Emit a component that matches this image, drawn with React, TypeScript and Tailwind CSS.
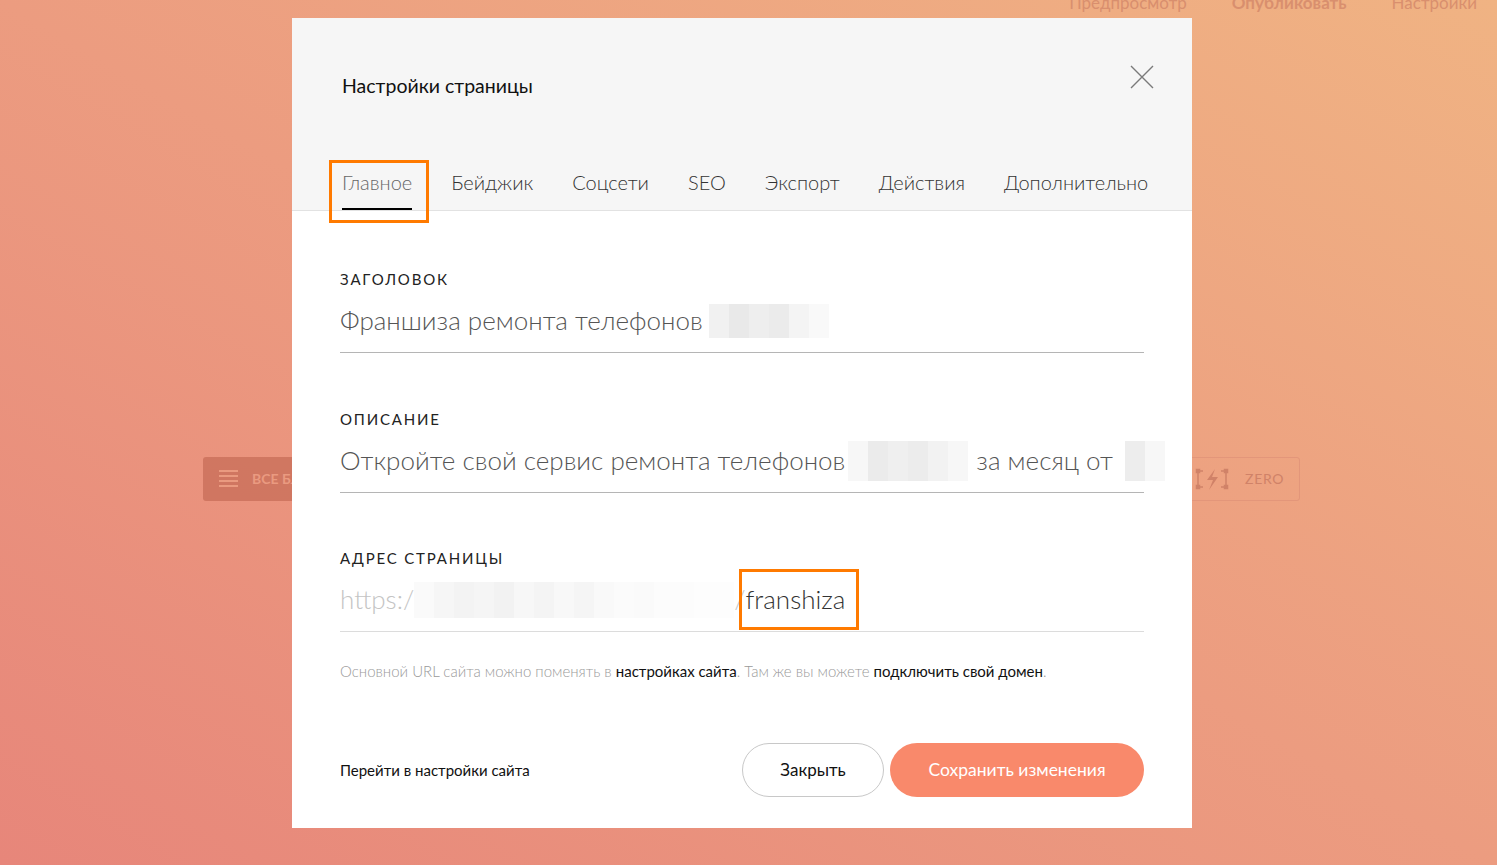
import React from 'react';

const FONT = { fontFamily: 'Lato, "Open Sans", "Liberation Sans", sans-serif' };

const TABS = ['Главное', 'Бейджик', 'Соцсети', 'SEO', 'Экспорт', 'Действия', 'Дополнительно'];

// pixelated blur placeholder, like the censored parts of the screenshot
const Blur = ({ cells, className }: { cells: string[]; className?: string }) => (
  <span className={`inline-flex items-stretch align-middle ${className ?? ''}`}>
    {cells.map((c, i) => (
      <span key={i} className="w-[20px] h-full" style={{ background: c }} />
    ))}
  </span>
);

const Field = ({ label, children, line = 'border-[#b5b5b5]' }: { label: string; children: React.ReactNode; line?: string }) => (
  <div className={`border-b ${line} pb-[15px]`}>
    <div className="text-[15px] leading-[20px] tracking-[0.12em] text-[#222]">{label}</div>
    <div className="mt-[15px] h-[33px] flex items-center text-[26px] font-light text-[#555] whitespace-nowrap">
      {children}
    </div>
  </div>
);

export default function App() {
  return (
    <div
      className="relative w-full h-[865px] overflow-hidden bg-gradient-to-tr from-[#e7867a] via-[#ec9c80] to-[#f0b383]"
      style={FONT}
    >
      {/* page behind the dialog */}
      <div className="flex justify-end gap-[45px] pr-[20px] -mt-[10px] text-[17px] text-[#d98f6e]">
        <span>Предпросмотр</span>
        <span className="font-bold">Опубликовать</span>
        <span>Настройки</span>
      </div>
      <div className="mt-[441px] flex justify-between pl-[203px] pr-[197px]">
        <div className="h-[44px] w-[130px] rounded-[3px] bg-[#c96f5a]/80 flex items-center gap-[14px] pl-[16px] text-[14px] font-bold text-[#ea9a80]">
          <span className="flex flex-col gap-[3px]">
            <span className="block w-[19px] h-[2px] bg-[#ea9a80]" />
            <span className="block w-[19px] h-[2px] bg-[#ea9a80]" />
            <span className="block w-[19px] h-[2px] bg-[#ea9a80]" />
            <span className="block w-[19px] h-[2px] bg-[#ea9a80]" />
          </span>
          ВСЕ БЛОКИ
        </div>
        <div className="h-[44px] w-[130px] rounded-[3px] border border-[#e3967a] flex items-center gap-[16px] pl-[24px] text-[14px] text-[#d08268] tracking-wider">
          <svg width="34" height="24" viewBox="0 0 34 24" fill="none" stroke="#d08268" strokeWidth="1.5">
            <path d="M8 4H3v16h5M26 4h5v16h-5" />
            <rect x="1.5" y="2.5" width="3" height="3" fill="#d08268" />
            <rect x="1.5" y="18.5" width="3" height="3" fill="#d08268" />
            <rect x="29.5" y="2.5" width="3" height="3" fill="#d08268" />
            <rect x="29.5" y="18.5" width="3" height="3" fill="#d08268" />
            <path d="M20 2l-8 11h6l-4 10 9-13h-6z" fill="#d08268" stroke="none" />
          </svg>
          ZERO
        </div>
      </div>

      {/* dialog */}
      <div className="absolute left-[292px] top-[18px] w-[900px] h-[810px] bg-white flex flex-col">
        <div className="bg-[#f6f6f6] border-b border-[#e2e2e2] h-[193px] px-[50px] flex flex-col">
          <div className="flex items-center justify-between h-[46px] mt-[45px]">
            <span className="text-[19.5px] text-[#111]">Настройки страницы</span>
            <svg width="24" height="24" viewBox="0 0 24 24" className="-mr-[12px] -mt-[19px]" stroke="#7a7a7a" strokeWidth="1.4">
              <path d="M1 1l22 22M23 1L1 23" />
            </svg>
          </div>
          <div className="mt-auto flex gap-[39px] text-[20px] font-light text-[#333]">
            {TABS.map((t, i) => (
              <div key={t} className="relative">
                <div className={`pb-[13px] leading-[26px] ${i === 0 ? 'border-b-2 border-black text-[#666]' : 'border-b-2 border-transparent'}`}>
                  {t}
                </div>
                {i === 0 && (
                  <div className="absolute -left-[13px] -right-[17px] -top-[9px] -bottom-[13px] border-[3px] border-[#ff7a00]" />
                )}
              </div>
            ))}
          </div>
        </div>

        <div className="px-[48px] pt-[58px] flex flex-col flex-1">
          <Field label="ЗАГОЛОВОК">
            Франшиза ремонта телефонов
            <Blur className="ml-[6px] h-[34px]" cells={['#f1f1f1', '#e9e9e9', '#eeeeee', '#ebebeb', '#f4f4f4', '#f9f9f9']} />
          </Field>

          <div className="mt-[56px]">
            <Field label="ОПИСАНИЕ">
              Откройте свой сервис ремонта телефонов
              <Blur className="ml-[3px] mr-[8px] h-[40px]" cells={['#f7f7f7', '#ebebeb', '#efefef', '#ececec', '#f2f2f2', '#f7f7f7']} />
              за месяц от
              <Blur className="ml-[12px] h-[40px]" cells={['#ededed', '#f7f7f7']} />
            </Field>
          </div>

          <div className="mt-[55px]">
            <Field label="АДРЕС СТРАНИЦЫ" line="border-[#dcdcdc]">
              <span className="text-[#c4c4c4]">https:/</span>
              <Blur className="h-[36px]" cells={['#fafafa', '#f6f6f6', '#f3f3f3', '#f5f5f5', '#f2f2f2', '#f7f7f7', '#f4f4f4', '#f8f8f8', '#f5f5f5', '#f9f9f9', '#fbfbfb', '#fafafa', '#fcfcfc', '#fcfcfc', '#fdfdfd', '#fdfdfd']} />
              <span className="text-[#c4c4c4]">/</span>
              <span className="relative text-[#333]">
                franshiza
                <span className="absolute -left-[7px] -right-[14px] -top-[11px] -bottom-[11px] border-[3px] border-[#ff7a00]" />
              </span>
            </Field>
          </div>

          <p className="mt-[30px] text-[15px] font-light text-[#9a9a9a] leading-[18px]">
            Основной URL сайта можно поменять в <span className="text-[#111] font-normal">настройках сайта</span>. Там же вы можете{' '}
            <span className="text-[#111] font-normal">подключить свой домен</span>.
          </p>

          <div className="mt-auto mb-[31px] flex items-center">
            <span className="text-[15px] text-[#111]">Перейти в настройки сайта</span>
            <button className="ml-auto h-[54px] w-[142px] rounded-full border border-[#c8c8c8] bg-white text-[17px] text-[#111]">
              Закрыть
            </button>
            <button className="ml-[6px] h-[54px] w-[254px] rounded-full bg-[#f9896b] text-[17.5px] text-white">
              Сохранить изменения
            </button>
          </div>
        </div>
      </div>
    </div>
  );
}
